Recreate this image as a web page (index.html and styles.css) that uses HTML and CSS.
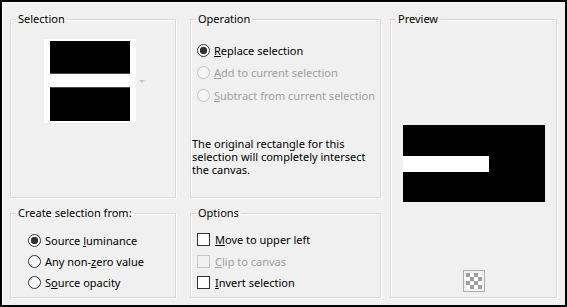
FILE: index.html
```html
<!DOCTYPE html>
<html lang="en">
<head>
  <meta charset="UTF-8">
  <title>Selection From Mask</title>
  <link rel="stylesheet" href="styles.css">
</head>
<body>
  <div class="dialog">
    <div class="col col-left">
      <fieldset class="group group-selection">
        <legend>Selection</legend>
        <div class="swatch-row">
          <div class="swatch">
            <div class="swatch-bar bar-top"></div>
            <div class="swatch-bar bar-bottom"></div>
          </div>
          <span class="drop-arrow"></span>
        </div>
      </fieldset>
      <fieldset class="group group-source">
        <legend>Create selection from:</legend>
        <ul class="choices source-choices">
          <li class="choice"><span class="radio checked"></span><span>Source <u>l</u>uminance</span></li>
          <li class="choice"><span class="radio"></span><span>Any non-<u>z</u>ero value</span></li>
          <li class="choice"><span class="radio"></span><span>S<u>o</u>urce opacity</span></li>
        </ul>
      </fieldset>
    </div>

    <div class="col col-mid">
      <fieldset class="group group-operation">
        <legend>Operation</legend>
        <ul class="choices op-choices">
          <li class="choice"><span class="radio checked"></span><span><u>R</u>eplace selection</span></li>
          <li class="choice disabled"><span class="radio"></span><span><u>A</u>dd to current selection</span></li>
          <li class="choice disabled"><span class="radio"></span><span><u>S</u>ubtract from current selection</span></li>
        </ul>
        <p class="note">The original rectangle for this selection will completely intersect the canvas.</p>
      </fieldset>
      <fieldset class="group group-options">
        <legend>Options</legend>
        <ul class="choices option-choices">
          <li class="choice"><span class="check"></span><span><u>M</u>ove to upper left</span></li>
          <li class="choice disabled"><span class="check"></span><span><u>C</u>lip to canvas</span></li>
          <li class="choice"><span class="check"></span><span><u>I</u>nvert selection</span></li>
        </ul>
      </fieldset>
    </div>

    <fieldset class="group group-preview">
      <legend>Preview</legend>
      <div class="preview-canvas">
        <div class="preview-bar"></div>
      </div>
      <div class="checker-btn"><div class="checker"></div></div>
    </fieldset>
  </div>
</body>
</html>
```

FILE: styles.css
```css
/* Dialog shell */
body {
  margin: 0;
  font-family: "Noto Sans", "Segoe UI", sans-serif;
  font-size: 11px;
  color: #000;
  background: #fff;
}

.dialog {
  display: flex;
  width: 567px;
  height: 307px;
  box-sizing: border-box;
  padding: 10px 8px 7px 8px;
  border: 2px solid #000;
  background-color: #f0f0f0;
  box-shadow: inset 1px 1px 0 #fff;
}

.col {
  display: grid;
  grid-template-rows: 186px 92px;
  row-gap: 8px;
}

.col-left {
  width: 166px;
}

.col-mid {
  width: 191px;
  margin: 0 9px 0 14px;
}

/* Group boxes */
.group {
  margin: 0;
  padding: 0;
  min-width: 0;
  border: 1px solid #d9d9d9;
  box-shadow: inset 1px 1px 0 #fff, 1px 1px 0 #fff;
}

.group legend {
  margin-left: 5px;
  padding: 0 2px;
  line-height: 14px;
}

/* Selection swatch */
.swatch-row {
  display: flex;
  align-items: center;
  margin: 13px 0 0 33px;
}

.swatch {
  width: 92px;
  box-sizing: border-box;
  padding: 2px 6px;
  background-color: #fff;
}

.swatch-bar {
  background-color: #000;
}

.bar-top {
  height: 32px;
  border-bottom: 1px solid #4a4a4a;
}

.bar-bottom {
  height: 33px;
  margin-top: 13px;
  border-top: 1px solid #4a4a4a;
}

.drop-arrow {
  width: 0;
  height: 0;
  margin-left: 3px;
  border-left: 3px solid transparent;
  border-right: 3px solid transparent;
  border-top: 3px solid #c4c4c4;
}

/* Radio and check lists */
.choices {
  list-style: none;
  margin: 0;
  padding: 0;
}

.choice {
  display: flex;
  align-items: center;
  white-space: nowrap;
}

.choice.disabled {
  color: #a0a0a0;
}

.radio,
.check {
  flex: none;
  width: 13px;
  height: 13px;
  box-sizing: border-box;
  border: 1px solid #333;
  background-color: #fff;
  margin-right: 4px;
}

.radio {
  border-radius: 50%;
}

.radio.checked {
  background: radial-gradient(circle, #333 0 3.4px, #fff 4px);
}

.disabled .radio {
  border-color: #c2c2c2;
  background-color: #f6f6f6;
}

.disabled .check {
  border-color: #c8c8c8;
  background-color: #f0f0f0;
}

.op-choices {
  margin-top: 13px;
  padding-left: 6px;
}

.op-choices .choice {
  height: 22.5px;
}

.note {
  margin: 30px 0 0 0;
  padding-left: 1px;
  line-height: 13px;
  width: 180px;
}

.source-choices {
  margin-top: 9.5px;
  padding-left: 17px;
}

.source-choices .choice {
  height: 21px;
}

.option-choices {
  margin-top: 9px;
  padding-left: 6px;
}

.option-choices .choice {
  height: 21.5px;
}

.option-choices .check {
  margin-right: 5px;
}

/* Preview */
.group-preview {
  width: 167px;
  height: 286px;
  box-sizing: border-box;
  display: flex;
  flex-direction: column;
  align-items: center;
}

.preview-canvas {
  width: 142px;
  height: 77px;
  margin-top: 99px;
  background-color: #000;
  padding-top: 31px;
  box-sizing: border-box;
}

.preview-bar {
  width: 86px;
  height: 16px;
  background-color: #fff;
}

.checker-btn {
  margin-top: 68px;
  width: 22px;
  height: 22px;
  box-sizing: border-box;
  border: 1px solid #adadad;
  padding: 2px;
  background-color: #f0f0f0;
}

.checker {
  width: 16px;
  height: 16px;
  background: repeating-conic-gradient(#fff 0 25%, #a0a0a0 0 50%) 0 0 / 8px 8px;
}
```
